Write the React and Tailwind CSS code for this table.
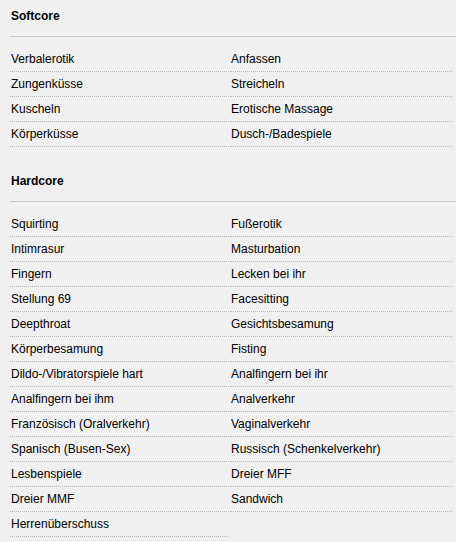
import React from 'react';

const sections = [
  {
    title: 'Softcore',
    items: [
      'Verbalerotik', 'Anfassen',
      'Zungenküsse', 'Streicheln',
      'Kuscheln', 'Erotische Massage',
      'Körperküsse', 'Dusch-/Badespiele',
    ],
  },
  {
    title: 'Hardcore',
    items: [
      'Squirting', 'Fußerotik',
      'Intimrasur', 'Masturbation',
      'Fingern', 'Lecken bei ihr',
      'Stellung 69', 'Facesitting',
      'Deepthroat', 'Gesichtsbesamung',
      'Körperbesamung', 'Fisting',
      'Dildo-/Vibratorspiele hart', 'Analfingern bei ihr',
      'Analfingern bei ihm', 'Analverkehr',
      'Französisch (Oralverkehr)', 'Vaginalverkehr',
      'Spanisch (Busen-Sex)', 'Russisch (Schenkelverkehr)',
      'Lesbenspiele', 'Dreier MFF',
      'Dreier MMF', 'Sandwich',
      'Herrenüberschuss',
    ],
  },
];

const App = () => {
  return (
    <div className="min-h-[542px] w-[456px] bg-[#f0f0f0] text-[12px] text-black font-['Liberation_Sans',Arial,sans-serif]">
      {sections.map((section, i) => (
        <div key={section.title} className={i > 0 ? 'mt-[18px]' : ''}>
          {/* Section heading with full-width rule */}
          <div className="ml-[10px] border-b border-[#c9c9c9] pt-[9px] pb-[13px] pl-[1px] font-bold leading-[14px]">
            {section.title}
          </div>

          <ul className="ml-[10px] mt-[10px] grid grid-cols-[219px_222px] gap-x-[1px]">
            {section.items.map((item) => (
              <li
                key={item}
                className="h-[25px] border-b border-dotted border-[#b5b5b5] pl-[1px] leading-[24px] whitespace-nowrap"
              >
                {item}
              </li>
            ))}
          </ul>
        </div>
      ))}
    </div>
  );
};

export default App;
